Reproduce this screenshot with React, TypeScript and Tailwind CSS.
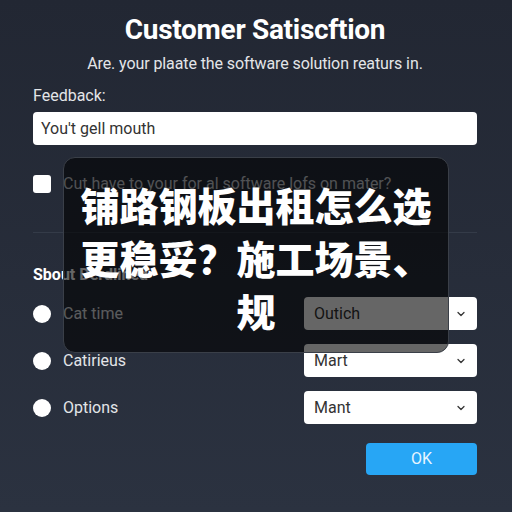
import { ChevronDown } from "lucide-react";

const rows = [
  { label: "Cat time", value: "Outich" },
  { label: "Catirieus", value: "Mart" },
  { label: "Options", value: "Mant" },
];

export default function App() {
  return (
    <div className="relative h-[512px] w-full overflow-hidden bg-linear-to-b from-[#222733] to-[#2b3240] font-['Roboto','Liberation_Sans',sans-serif] text-[#e5e7eb]">
      <div className="flex flex-col pl-[33px] pr-[35px] pt-[14px]">
        <h1 className="text-center text-[28px] font-bold leading-[32px] tracking-[-0.3px] text-white">Customer Satiscftion</h1>
        <p className="mt-[6px] text-center text-[16px] leading-[24px] tracking-[-0.1px] text-[#e3e5e8]">Are. your plaate the software solution reaturs in.</p>

        <label className="mt-[8px] text-[16px] leading-[24px] text-[#e3e5e8]">Feedback:</label>
        <div className="mt-[4px] flex h-[33px] items-center rounded-[4px] bg-white px-[8px] text-[16px] text-[#333]">You't gell mouth</div>

        <div className="mt-[27px] flex h-[24px] items-center gap-[12px]">
          <span className="h-[18px] w-[18px] rounded-[3px] bg-white" />
          <span className="text-[16px] text-[#c9ccd2]">Cut have to your for al software lofs on mater?</span>
        </div>

        <div className="mt-[36px] h-px bg-[#343b48]" />

        <h2 className="mt-[30px] text-[16px] font-bold leading-[24px] text-white">Sbout Derdlined</h2>

        <div className="mt-[10px] flex flex-col gap-[14px]">
          {rows.map((r) => (
            <div key={r.label} className="flex h-[33px] items-center">
              <span className="h-[18px] w-[18px] rounded-full bg-white" />
              <span className="ml-[12px] flex-1 text-[16px] text-[#e3e5e8]">{r.label}</span>
              <div className="flex h-[33px] w-[173px] items-center justify-between rounded-[4px] bg-white pl-[10px] pr-[10px] text-[16px] text-[#333]">
                <span>{r.value}</span>
                <ChevronDown size={12} strokeWidth={2.5} />
              </div>
            </div>
          ))}
        </div>

        <div className="mt-[19px] flex justify-end">
          <button className="h-[32px] w-[111px] rounded-[4px] bg-[#27a6f5] text-[16px] text-[#e8f5ff]">OK</button>
        </div>
      </div>

      <div className="absolute left-[63px] top-[157px] flex h-[196px] w-[386px] flex-col items-center rounded-[12px] border border-[#3a3f48] bg-black/60 px-[16px] pt-[20px]">
        <p className="text-center text-[39px] font-black leading-[53px] text-white font-['Noto_Sans_CJK_SC','Noto_Sans',sans-serif]">
          铺路钢板出租怎么选更稳妥？施工场景、规
        </p>
      </div>
    </div>
  );
}
